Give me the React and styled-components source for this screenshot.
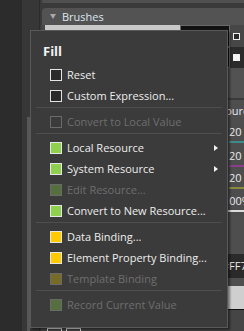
import React from "react";
import styled, { createGlobalStyle } from "styled-components";

const GlobalStyle = createGlobalStyle`
  html, body { margin: 0; padding: 0; background: #2c2c2c; overflow: hidden; }
  #root { width: 244px; height: 331px; }
`;

const Stage = styled.div`
  position: relative;
  width: 244px;
  height: 331px;
  overflow: hidden;
  display: grid;
  grid-template-columns: 22px 18px 1fr;
  font-family: "Open Sans", "Noto Sans", sans-serif;
`;

const LeftDark = styled.div`
  background: #2c2c2c;
`;

const Gutter = styled.div`
  background: #373737;
  border-right: 1px solid #2b2b2b;
  display: flex;
  flex-direction: column;
  padding: 117px 0 0 5px;
`;

const ScrollThumb = styled.div`
  width: 3px;
  flex: 1;
  background: #575757;
`;

const Panel = styled.div`
  background: #3a3a3a;
  display: flex;
  flex-direction: column;
  padding-left: 1px;
  overflow: hidden;
`;

const TopStrip = styled.div`
  height: 3px;
  background: #4f4f4f;
  margin-left: 1px;
`;

const Header = styled.div`
  height: 17px;
  margin: 5px 0 0 1px;
  background: #535353;
  border-radius: 4px 0 0 0;
  display: flex;
  align-items: center;
  gap: 6px;
  padding-left: 8px;
  color: #dde7ef;
  font-size: 11px;
`;

const Caret = styled.span`
  width: 0;
  height: 0;
  border-left: 3px solid transparent;
  border-right: 3px solid transparent;
  border-top: 5px solid #a8a8a8;
`;

const SwatchRow = styled.div`
  height: ${(p) => p.h}px;
  background: ${(p) => p.bg};
  display: grid;
  grid-template-columns: 4px 135px 50px 1fr;
  align-items: stretch;
`;

const Field = styled.div`
  background: ${(p) => p.bg};
`;

const SwatchBox = styled.div`
  background: #111;
  border: 1px solid #6a6a6a;
`;

const MiniCheckCell = styled.div`
  display: flex;
  align-items: center;
  padding-left: 3px;
`;

const MiniCheck = styled.span`
  width: 7px;
  height: 7px;
  box-sizing: border-box;
  border: 1px solid #f0f0f0;
  background: ${(p) => (p.filled ? "#f4f4f4" : "#2b2b2b")};
`;

const Band = styled.div`
  height: ${(p) => p.h}px;
  flex: none;
  background: ${(p) => p.bg};
`;

const ValueRow = styled.div`
  height: ${(p) => p.h}px;
  flex: none;
  background: ${(p) => p.bg || "#4d4d4d"};
  display: flex;
  flex-direction: column;
  justify-content: center;
  padding-left: ${(p) => p.indent}px;
  color: #ececec;
  font-size: 11px;
`;

const ValueText = styled.span`
  line-height: 14px;
  white-space: nowrap;
  overflow: hidden;
`;

const ValueBar = styled.div`
  height: 2px;
  margin-top: 2px;
  background: ${(p) => p.color};
`;

const BottomRow = styled.div`
  flex: 1;
  background: #454545;
  display: flex;
  align-items: flex-end;
  gap: 4px;
  padding-left: 6px;
`;

const SmallBox = styled.span`
  width: 15px;
  height: 3px;
  box-sizing: border-box;
  border: 1px solid #e8e8e8;
  border-bottom: none;
`;

/* ---------- Menu ---------- */

const Menu = styled.div`
  position: absolute;
  left: 30px;
  top: 30px;
  width: 198px;
  height: 298px;
  box-sizing: border-box;
  background: #3b3b3b;
  border: 1px solid #595959;
  box-shadow: 2px 2px 2px rgba(0, 0, 0, 0.45);
  display: flex;
  flex-direction: column;
  font-family: "Open Sans", "Noto Sans", sans-serif;
`;

const Title = styled.div`
  height: 33px;
  box-sizing: border-box;
  padding: 6px 0 0 12px;
  display: flex;
  align-items: center;
  color: #f2f2f2;
  font-weight: 700;
  font-size: 13px;
`;

const Item = styled.div`
  height: 21px;
  display: flex;
  align-items: center;
  gap: 5px;
  padding: 0 9px 0 19px;
  color: ${(p) => (p.disabled ? "#6e6e6e" : "#ededed")};
  font-size: 11px;
  white-space: nowrap;
`;

const Box = styled.span`
  width: 12px;
  height: 12px;
  flex: none;
  box-sizing: border-box;
  border: 1px solid ${(p) => (p.disabled ? "#6a6a6a" : "#e4e4e4")};
  background: ${(p) => p.fill};
`;

const Arrow = styled.span`
  margin-left: auto;
  width: 0;
  height: 0;
  border-top: 3.5px solid transparent;
  border-bottom: 3.5px solid transparent;
  border-left: 4px solid #f0f0f0;
`;

const Separator = styled.div`
  height: 1px;
  margin: 1px 5px 3px 5px;
  background: #4e4e4e;
`;

const FILL = {
  plain: "#2a2a2a",
  plainOff: "#3b3b3b",
  green: "#8fd04f",
  greenOff: "#566f3e",
  yellow: "#ffcb00",
  yellowOff: "#786a27",
};

const groups = [
  [
    { label: "Reset", fill: FILL.plain },
    { label: "Custom Expression...", fill: FILL.plain },
  ],
  [{ label: "Convert to Local Value", fill: FILL.plainOff, disabled: true }],
  [
    { label: "Local Resource", fill: FILL.green, sub: true },
    { label: "System Resource", fill: FILL.green, sub: true },
    { label: "Edit Resource...", fill: FILL.greenOff, disabled: true },
    { label: "Convert to New Resource...", fill: FILL.green },
  ],
  [
    { label: "Data Binding...", fill: FILL.yellow },
    { label: "Element Property Binding...", fill: FILL.yellow },
    { label: "Template Binding", fill: FILL.yellowOff, disabled: true },
  ],
  [{ label: "Record Current Value", fill: FILL.greenOff, disabled: true }],
];

export default function App() {
  return (
    <>
      <GlobalStyle />
      <Stage>
        <LeftDark />
        <Gutter>
          <ScrollThumb />
        </Gutter>
        <Panel>
          <TopStrip />
          <Header>
            <Caret />
            <span>Brushes</span>
          </Header>
          <SwatchRow h={22} bg="#474747">
            <span />
            <Field bg="#c9c9c9" />
            <SwatchBox />
            <MiniCheckCell>
              <MiniCheck />
            </MiniCheckCell>
          </SwatchRow>
          <SwatchRow h={21} bg="#2b2b2b">
            <span />
            <Field bg="#2b2b2b" />
            <SwatchBox />
            <MiniCheckCell>
              <MiniCheck filled />
            </MiniCheckCell>
          </SwatchRow>
          <Band h={30} bg="#525252" />
          <Band h={2} bg="#3a3a3a" />
          <ValueRow h={22} indent={166} bg="#4e4e4e">
            <ValueText>Resource</ValueText>
          </ValueRow>
          <ValueRow h={24} indent={188}>
            <ValueText>20</ValueText>
            <ValueBar color="#3d8c8a" />
          </ValueRow>
          <ValueRow h={24} indent={188}>
            <ValueText>20</ValueText>
            <ValueBar color="#8c3d8c" />
          </ValueRow>
          <ValueRow h={20} indent={188}>
            <ValueText>20</ValueText>
            <ValueBar color="#8a8a3d" />
          </ValueRow>
          <ValueRow h={26} indent={182}>
            <ValueText>100%</ValueText>
            <ValueBar color="#dcdcdc" />
          </ValueRow>
          <Band h={38} bg="#4e4e4e" />
          <ValueRow h={24} indent={181} bg="#2a2a2a">
            <ValueText>#FF78</ValueText>
          </ValueRow>
          <Band h={8} bg="#4e4e4e" />
          <Band h={23} bg="#cfcfcf" />
          <Band h={1} bg="#111" />
          <BottomRow>
            <SmallBox />
            <SmallBox />
          </BottomRow>
        </Panel>

        <Menu>
          <Title>Fill</Title>
          {groups.map((g, gi) => (
            <React.Fragment key={gi}>
              {gi > 0 && <Separator />}
              {g.map((it) => (
                <Item key={it.label} disabled={it.disabled}>
                  <Box fill={it.fill} disabled={it.disabled} />
                  <span>{it.label}</span>
                  {it.sub && <Arrow />}
                </Item>
              ))}
            </React.Fragment>
          ))}
        </Menu>
      </Stage>
    </>
  );
}
